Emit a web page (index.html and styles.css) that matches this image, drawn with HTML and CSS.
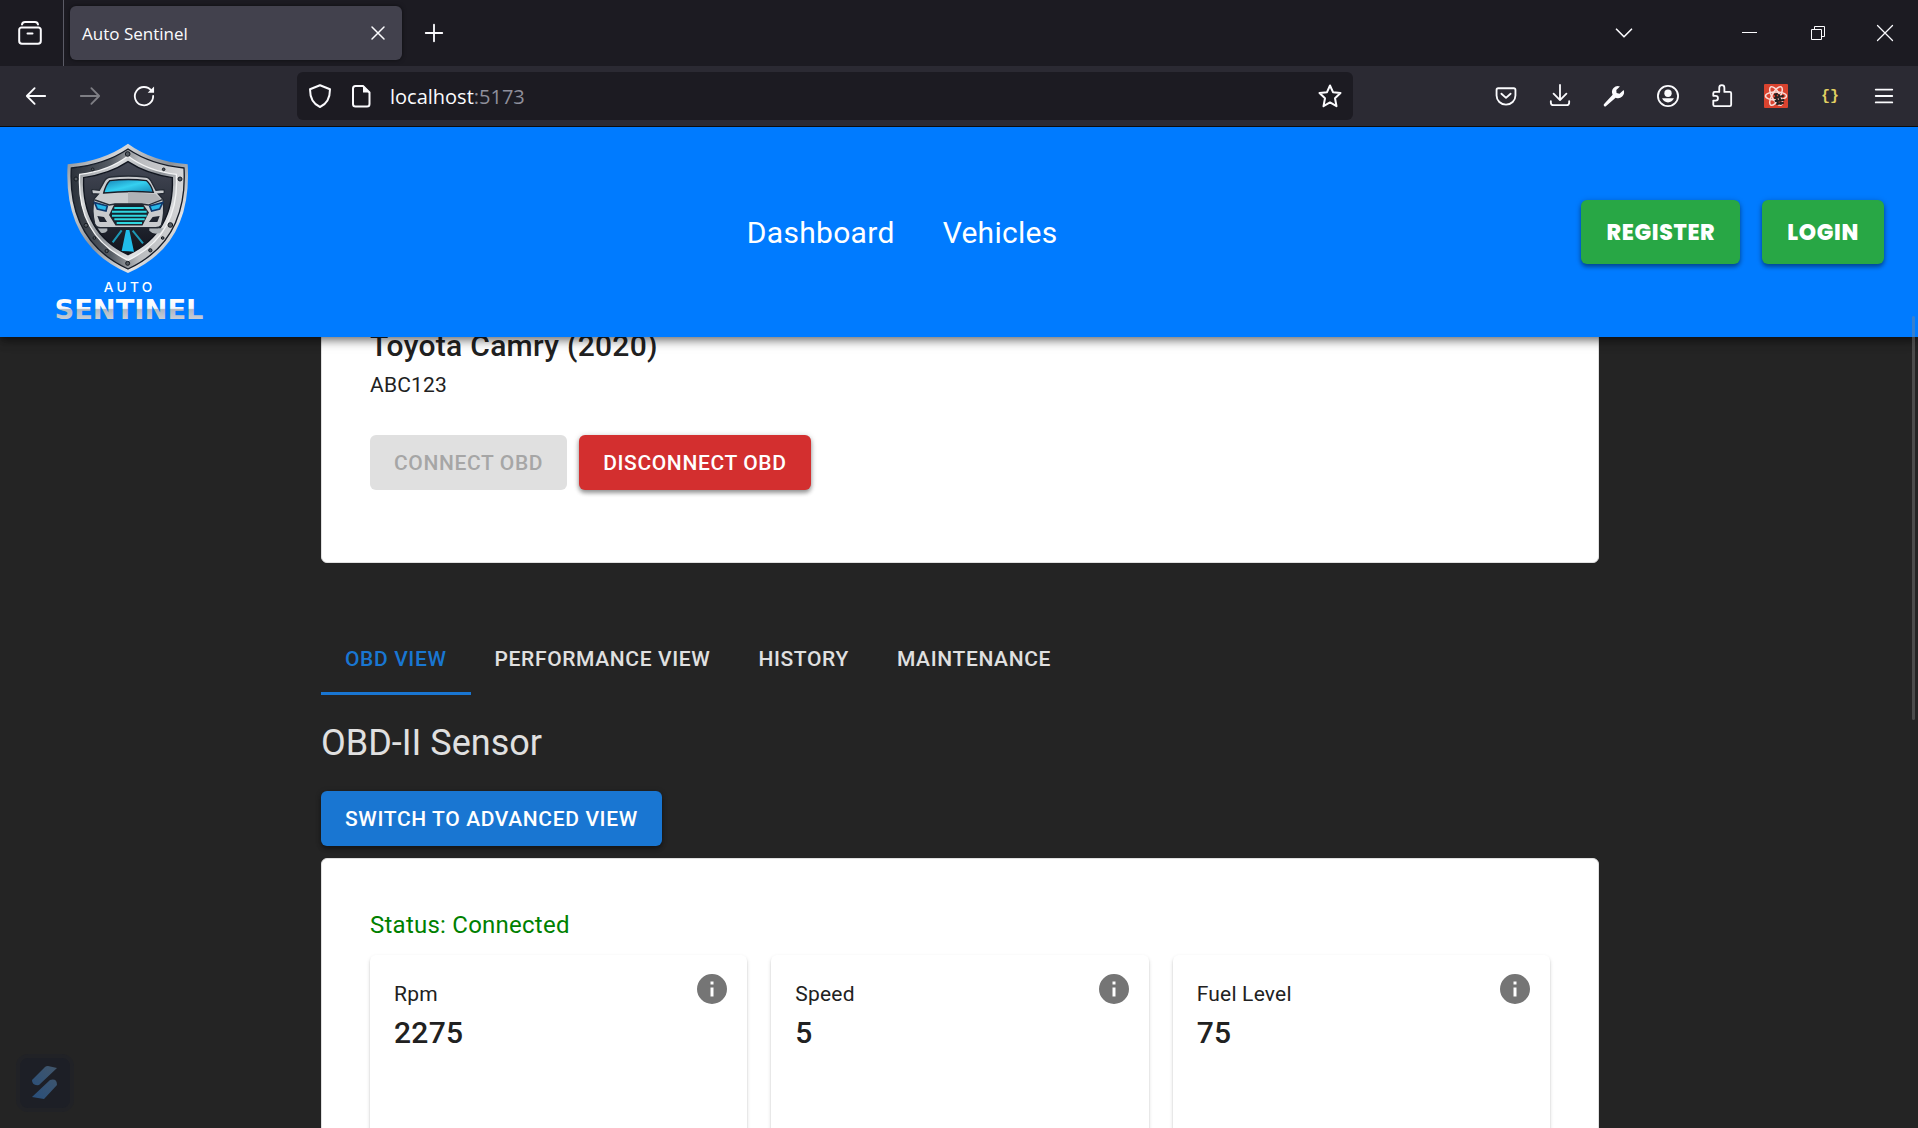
FILE: index.html
```html
<!DOCTYPE html>
<html lang="en">
<head>
<meta charset="utf-8">
<meta name="viewport" content="width=device-width, initial-scale=1">
<title>Auto Sentinel</title>
<link rel="stylesheet" href="styles.css">
</head>
<body>
<div class="browser">
  <div class="tabstrip">
    <button class="view-btn" aria-label="Firefox View"><svg class="ico" viewBox="0 0 24 24"><path d="M4 3.500Q4.500 1 7 1H17Q19.500 1 20 3.500M3.500 6.500H20.500A2.300 2.300 0 0 1 22.800 8.800V20A2.800 2.800 0 0 1 20 22.800H4A2.800 2.800 0 0 1 1.200 20V8.800A2.300 2.300 0 0 1 3.500 6.500ZM9.500 12.500H14.500"/></svg></button>
    <div class="tab"><span>Auto Sentinel</span><button class="tab-close" aria-label="Close tab"><svg class="ico thin" viewBox="0 0 24 24"><path d="M6 6 18 18M18 6 6 18"/></svg></button></div>
    <button class="icon-btn new-tab" aria-label="New tab"><svg class="ico" viewBox="0 0 24 24"><path d="M12 3V21M3 12H21"/></svg></button>
    <div class="window-controls">
      <button aria-label="List tabs"><svg class="ico" viewBox="0 0 24 24"><path d="M3 7.500 12 16.500 21 7.500"/></svg></button>
      <button aria-label="Minimize"><svg class="ico hair" viewBox="0 0 24 24"><path d="M5 11.500H20"/></svg></button>
      <button aria-label="Restore"><svg class="ico hair" viewBox="0 0 24 24"><path d="M5.500 8.500H15.500V18.500H5.500ZM8.500 8.500V5.500H18.500V15.500H15.500"/></svg></button>
      <button aria-label="Close window"><svg class="ico thin" viewBox="0 0 24 24"><path d="M3 3 21 21M21 3 3 21"/></svg></button>
    </div>
  </div>
  <div class="toolbar">
    <div class="nav-buttons">
      <button class="icon-btn" aria-label="Back"><svg class="ico" viewBox="0 0 24 24"><path d="M22 12H2M10.500 3.500 2 12 10.500 20.500"/></svg></button>
      <button class="icon-btn dim" aria-label="Forward" disabled><svg class="ico" viewBox="0 0 24 24"><path d="M2 12H22M13.500 3.500 22 12 13.500 20.500"/></svg></button>
      <button class="icon-btn" aria-label="Reload"><svg class="ico" viewBox="0 0 24 24"><path d="M20 6.200A10 10 0 1 0 22 12"/><path class="solid" d="M23 1.500V8.500H16Z"/></svg></button>
    </div>
    <div class="urlbar">
      <svg class="ico" viewBox="0 0 24 24"><path d="M12 1.200 22 5.300C22 13.500 19 20 12 23 5 20 2 13.500 2 5.300Z"/></svg>
      <svg class="ico" viewBox="0 0 24 24"><path d="M14 2H6.500A2.500 2.500 0 0 0 4 4.500V20A2.500 2.500 0 0 0 6.500 22.500H18A2.500 2.500 0 0 0 20.500 20V8.500Z"/><path class="solid" d="M14 1.500V8.500H21Z"/></svg>
      <div class="url"><span>localhost</span>:5173</div>
      <button class="star" aria-label="Bookmark this page"><svg class="ico" viewBox="0 0 24 24"><path d="M12 1.500 15 8.200 22.500 9 17 14.200 18.500 22.200 12 18.400 5.500 22.200 7 14.200 1.500 9 9 8.200Z"/></svg></button>
    </div>
    <div class="extensions">
      <button class="icon-btn" aria-label="Save to Pocket"><svg class="ico" viewBox="0 0 24 24"><path d="M3.500 3.500H20.500A1.800 1.800 0 0 1 22.300 5.300V11.500A10.300 10 0 0 1 1.700 11.500V5.300A1.800 1.800 0 0 1 3.500 3.500ZM7 9.500 12 14 17 9.500"/></svg></button>
      <button class="icon-btn" aria-label="Downloads"><svg class="ico" viewBox="0 0 24 24"><path d="M12 0V16M5 9.500 12 16.500 19 9.500M2 17.500V19A3 3 0 0 0 5 22H19A3 3 0 0 0 22 19V17.500"/></svg></button>
      <button class="icon-btn" aria-label="Developer tools"><svg class="ico" viewBox="0 0 24 24"><path class="solid" d="M22.500 5.500 18 9.500 14.800 8.800 14.500 5.500 18.500 1.500A6.500 6.500 0 0 0 10.500 10.500L1.200 20.800A1.500 1.500 0 0 0 3.400 23L13.800 13.800A6.500 6.500 0 0 0 22.500 5.500Z"/></svg></button>
      <button class="icon-btn" aria-label="Account"><svg class="ico" viewBox="0 0 24 24"><circle cx="12" cy="12" r="11"/><circle class="solid" cx="12" cy="9" r="4"/><path class="solid" d="M5.500 14.500H18.500Q16.500 19 12 19 7.500 19 5.500 14.500Z"/></svg></button>
      <button class="icon-btn" aria-label="Extensions"><svg class="ico" viewBox="0 0 24 24"><path d="M4 23Q2.500 23 2.500 21.500V17H5A2.600 2.600 0 0 0 5 11.800H2.500V9Q2.500 7.500 4 7.500H9V3A2.800 2.800 0 0 1 14.600 3V7.500H20.500Q22 7.500 22 9V21.500Q22 23 20.500 23Z"/></svg></button>
      <button class="icon-btn" aria-label="React Developer Tools"><svg class="ico react" viewBox="0 0 24 24"><rect class="react-bg" width="24" height="24" rx="1"/><ellipse cx="12" cy="12" rx="10.500" ry="4"/><ellipse cx="12" cy="12" rx="10.500" ry="4" transform="rotate(60 12 12)"/><ellipse cx="12" cy="12" rx="10.500" ry="4" transform="rotate(120 12 12)"/><path class="bug" d="M11 10.500 13 10M11 14 19 12M11.500 17 19.500 16M13 20 19 19M12 12 14 20M15 11 17 20"/></svg></button>
      <button class="icon-btn json" aria-label="JSON formatter">{}</button>
      <button class="icon-btn" aria-label="Menu"><svg class="ico" viewBox="0 0 24 24"><path d="M3 5H21M3 12H21M3 19H21"/></svg></button>
    </div>
  </div>

  <div class="page">
    <header class="appbar">
      <a class="logo" href="#" aria-label="Auto Sentinel home">
        <svg viewBox="18 -9 561 630">
          <defs>
            <linearGradient id="steel" x1="0" y1="0" x2="1" y2="1"><stop offset="0" stop-color="#777c82"/><stop offset=".25" stop-color="#d6d8da"/><stop offset=".5" stop-color="#8b9096"/><stop offset=".75" stop-color="#e2e3e5"/><stop offset="1" stop-color="#6f747b"/></linearGradient>
            <linearGradient id="rim" x1="0" y1="0" x2="1" y2="0"><stop offset="0" stop-color="#2c323b"/><stop offset=".35" stop-color="#555b63"/><stop offset=".6" stop-color="#b9bbbe"/><stop offset="1" stop-color="#d5d6d8"/></linearGradient>
            <linearGradient id="night" x1="0" y1="0" x2="0" y2="1"><stop offset="0" stop-color="#454a57"/><stop offset="1" stop-color="#10131c"/></linearGradient>
            <linearGradient id="glass" x1="0" y1="0" x2="1" y2="1"><stop offset="0" stop-color="#1480b4"/><stop offset=".5" stop-color="#35d0f0"/><stop offset="1" stop-color="#1485b4"/></linearGradient>
            <linearGradient id="chrome" gradientUnits="userSpaceOnUse" x1="0" y1="504" x2="0" y2="566"><stop offset="0" stop-color="#fff"/><stop offset=".5" stop-color="#f4f7fb"/><stop offset=".56" stop-color="#aeb7c2"/><stop offset="1" stop-color="#c5ccd5"/></linearGradient>
          </defs>
          <path d="M294 41Q365 93 473 103Q488 345 294 429Q98 345 113 103Q220 93 294 41Z" fill="url(#steel)"/>
          <path d="M294 57Q363 104 462 114Q474 333 294 417Q112 333 124 114Q224 104 294 57Z" fill="url(#rim)" stroke="#161c27" stroke-width="4"/>
          <path d="M294 78Q352 123 439 133Q450 315 294 391Q138 315 149 133Q236 123 294 78Z" fill="url(#steel)" stroke="#f3f4f5" stroke-width="4"/>
          <path d="M294 95Q350 132 427 143Q434 307 294 374Q154 307 161 143Q238 132 294 95Z" fill="url(#night)" stroke="#10151f" stroke-width="4"/>
          <g fill="#555b62" stroke="#161b22" stroke-width="3"><circle cx="293" cy="72" r="7"/><circle cx="188" cy="118" r="4"/><circle cx="401" cy="118" r="4"/><circle cx="138" cy="147" r="6"/><circle cx="450" cy="147" r="6"/><circle cx="168" cy="286" r="6"/><circle cx="421" cy="285" r="7"/><circle cx="193" cy="324" r="4"/><circle cx="398" cy="324" r="4"/><circle cx="230" cy="363" r="5"/><circle cx="361" cy="361" r="5"/><circle cx="293" cy="400" r="6"/></g>
          <path d="M203 295H232V302Q225 311 213 308ZM358 295H401L390 309Q370 315 358 302Z" fill="#aab0b5"/>
          <path d="M185 181Q185 178 190 179L208 181 224 152Q230 142 243 141Q295 135 346 141Q357 142 363 153L378 181 399 179Q405 179 402 190L385 192 399 208Q405 250 394 286Q389 293 377 293H212Q199 293 194 281Q184 241 193 206L205 192 187 191Z" fill="#c9cbce" stroke="#242a34" stroke-width="4"/>
          <path d="M221 189Q227 164 239 152Q295 145 350 152Q363 163 370 187Q295 181 221 189Z" fill="url(#glass)" stroke="#181e29" stroke-width="4"/>
          <path d="M294 187V222H346Q380 217 392 207L376 192Z" fill="#b0b2b6"/>
          <path d="M195 210 238 225 255 222H334L355 225 397 209" fill="none" stroke="#252b35" stroke-width="4"/>
          <path d="M194 218 232 228 228 243 202 237ZM398 218 359 228 365 243 389 237Z" fill="#27b7e8" stroke="#10386c" stroke-width="5"/>
          <path d="M255 224H337L354 248 336 284H258L240 255Z" fill="#122432" stroke="#20252e" stroke-width="5"/>
          <path d="M253 234H341M246 245H350M246 257H350M253 268H344M260 279H336" stroke="#30d6df" stroke-width="6"/>
          <path d="M202 258 222 261 231 276H209ZM389 258 368 261 357 276H382Z" fill="#1e2430"/>
          <path d="M288 300H298L312 365 294 364 275 363Z" fill="#20bdea"/>
          <path d="M275 301 248 337M308 302 339 340" stroke="#1d98b5" stroke-width="6"/>
          <text class="logo-auto" x="299" y="486">AUTO</text>
          <text class="logo-name" x="297" y="566" fill="url(#chrome)">SENTINEL</text>
        </svg>
      </a>
      <nav class="links"><a href="#">Dashboard</a><a href="#">Vehicles</a></nav>
      <div class="auth"><button class="btn auth-btn">REGISTER</button><button class="btn auth-btn">LOGIN</button></div>
    </header>

    <main class="content">
      <section class="card">
        <h2 class="value">Toyota Camry (2020)</h2>
        <p class="label">ABC123</p>
        <div class="actions"><button class="btn" disabled>CONNECT OBD</button><button class="btn danger">DISCONNECT OBD</button></div>
      </section>

      <div class="tabs" role="tablist">
        <button role="tab" aria-selected="true">OBD VIEW</button><button role="tab">PERFORMANCE VIEW</button><button role="tab">HISTORY</button><button role="tab">MAINTENANCE</button>
      </div>

      <h1 class="title">OBD-II Sensor</h1>
      <button class="btn primary">SWITCH TO ADVANCED VIEW</button>

      <section class="card readings">
        <p class="status">Status: Connected</p>
        <div class="sensors">
          <article class="sensor"><div><p class="label">Rpm</p><p class="value">2275</p></div><button aria-label="About Rpm"><svg viewBox="0 0 24 24"><path d="M12 2a10 10 0 1 0 0 20 10 10 0 0 0 0-20zm1 15h-2v-6h2zm0-8h-2V7h2z"/></svg></button></article>
          <article class="sensor"><div><p class="label">Speed</p><p class="value">5</p></div><button aria-label="About Speed"><svg viewBox="0 0 24 24"><path d="M12 2a10 10 0 1 0 0 20 10 10 0 0 0 0-20zm1 15h-2v-6h2zm0-8h-2V7h2z"/></svg></button></article>
          <article class="sensor"><div><p class="label">Fuel Level</p><p class="value">75</p></div><button aria-label="About Fuel Level"><svg viewBox="0 0 24 24"><path d="M12 2a10 10 0 1 0 0 20 10 10 0 0 0 0-20zm1 15h-2v-6h2zm0-8h-2V7h2z"/></svg></button></article>
        </div>
      </section>
    </main>

    <div class="scroll-thumb"></div>
    <button class="widget" aria-label="Open assistant"><svg viewBox="0 0 26 34"><defs><linearGradient id="bolt" x1="1" y1="0" x2="0" y2="1"><stop offset="0" stop-color="#42566a"/><stop offset="1" stop-color="#284f7c"/></linearGradient></defs><path fill="url(#bolt)" d="M13 1Q14 0 16 0L25 2 7 19Q0 20 0 14ZM18 14Q25 12 25 19L12 33 0 31Z"/></svg></button>
  </div>
</div>
</body>
</html>
```
FILE: styles.css
```css
* { box-sizing: border-box; }

body {
  margin: 0;
  background: #242424;
  font-family: Roboto, "Liberation Sans", sans-serif;
  color: #212121;
}

h1, h2, p { margin: 0; }

button {
  margin: 0;
  padding: 0;
  border: 0;
  background: none;
  color: inherit;
  font: inherit;
}

a { color: inherit; text-decoration: none; }

.browser {
  display: flex;
  flex-direction: column;
  height: 100vh;
  overflow: hidden;
}

/* Browser chrome */
.tabstrip {
  display: flex;
  align-items: center;
  flex: none;
  height: 66px;
  background: #1c1b22;
  color: #fbfbfe;
  font-family: "Open Sans", "Noto Sans", sans-serif;
}

.ico {
  display: block;
  width: 24px;
  height: 24px;
  fill: none;
  stroke: currentColor;
  stroke-width: 2;
  stroke-linecap: round;
  stroke-linejoin: round;
  overflow: visible;
}

.ico .solid { fill: currentColor; stroke: none; }
.ico.thin { stroke-width: 1.5; }
.ico.hair { stroke-width: 1; stroke-linecap: butt; stroke-linejoin: miter; }

.view-btn {
  display: grid;
  place-items: center;
  width: 64px;
  height: 66px;
  padding-right: 4px;
  border-right: 1px solid #5b5b66;
}

.tab {
  display: flex;
  align-items: center;
  justify-content: space-between;
  width: 332px;
  height: 54px;
  margin-left: 6px;
  padding: 0 12px;
  border-radius: 6px;
  background: #42414d;
  box-shadow: 0 0 4px #0008;
  font-size: 17px;
}

.icon-btn {
  display: grid;
  place-items: center;
  width: 54px;
  height: 48px;
}

.new-tab { margin-left: 5px; }
.new-tab .ico, .nav-buttons .ico { width: 22px; height: 22px; }

.window-controls { display: flex; margin-left: auto; }

.window-controls button {
  display: grid;
  place-items: center;
  width: 69px;
  height: 66px;
}

.window-controls button:first-child { margin-right: 56px; }
.window-controls button:last-child { width: 66px; }
.window-controls .ico { width: 20px; height: 20px; }
.window-controls .ico.hair { width: 24px; height: 24px; }

.toolbar {
  display: flex;
  align-items: center;
  flex: none;
  height: 61px;
  padding: 0 7px 0 9px;
  border-bottom: 1px solid #0c0c0d;
  background: #2b2a33;
  color: #fbfbfe;
  font-family: "Open Sans", "Noto Sans", sans-serif;
}

.nav-buttons { display: flex; flex: none; width: 288px; }
.icon-btn.dim { opacity: 0.4; }

.urlbar {
  display: flex;
  align-items: center;
  flex: 1;
  gap: 17px;
  height: 48px;
  padding: 0 11px;
  border-radius: 6px;
  background: #1c1b22;
  font-size: 20px;
}

.url { color: #8f8f9b; }
.url span { color: #fbfbfe; }
.star { margin-left: auto; }

.extensions { display: flex; flex: none; margin-left: 126px; }
.extensions .ico { width: 22px; height: 22px; }
.extensions .react { width: 24px; height: 24px; stroke: #f8dcd8; stroke-width: 1.5; }
.react .react-bg { fill: #d9432f; stroke: none; }
.react .bug { fill: none; stroke: #222; stroke-width: 2; }

.json {
  color: #e0cf62;
  font-family: "Liberation Mono", monospace;
  font-size: 15px;
  font-weight: 700;
}

/* Application */
.page {
  position: relative;
  flex: 1;
  min-height: 0;
  overflow: hidden;
}

.appbar {
  position: relative;
  z-index: 2;
  display: flex;
  align-items: center;
  height: 210px;
  padding: 0 34px 0 36px;
  background: #007bff;
  box-shadow: 0 3px 6px -1px #0005, 0 6px 8px #0003, 0 2px 15px #0002;
  color: #fff;
}

.logo { flex: none; width: 187px; height: 210px; }
.logo svg { display: block; width: 100%; height: 100%; }

.logo-auto, .logo-name { text-anchor: middle; }

.logo-auto {
  fill: #fff;
  font-family: Inter, sans-serif;
  font-size: 41px;
  font-weight: 500;
  letter-spacing: 10px;
}

.logo-name {
  font-family: "DejaVu Sans", sans-serif;
  font-size: 82px;
  font-weight: 700;
}

.links {
  display: flex;
  flex: 1;
  justify-content: center;
  gap: 48px;
  font-size: 30px;
  letter-spacing: 0.01em;
}

.auth { display: flex; flex: none; gap: 22px; }

.btn {
  height: 55px;
  padding: 0 24px;
  border-radius: 6px;
  font-size: 21px;
  font-weight: 500;
  letter-spacing: 0.03em;
  box-shadow: 0 3px 4px #0005, 0 1px 6px #0003;
  color: #fff;
}

.btn:disabled { background: #e0e0e0; color: #a6a6a6; box-shadow: none; }
.danger { background: #d32f2f; }
.primary { background: #1976d2; }

.auth-btn {
  height: 64px;
  padding: 0 25px;
  background: #28a745;
  font-family: Poppins, Inter, sans-serif;
  font-size: 22px;
  font-weight: 800;
}

.content {
  max-width: 1350px;
  margin: -64px auto 0;
  padding: 0 35px 0 37px;
}

.card {
  padding: 48px;
  border: 1px solid #e0e0e0;
  border-radius: 6px;
  background: #fff;
}

.value { font-size: 30px; font-weight: 500; line-height: 48px; letter-spacing: 0.01em; }
.label { font-size: 21px; line-height: 30px; letter-spacing: 0.01em; }

.actions { display: flex; gap: 12px; padding: 35px 0 24px; }

.tabs { display: flex; margin-top: 60px; color: #e0e0e0; }

.tabs button {
  height: 72px;
  padding: 0 24px;
  font-size: 21px;
  font-weight: 500;
  letter-spacing: 0.03em;
}

.tabs [aria-selected="true"] { box-shadow: inset 0 -3px #1976d2; color: #1976d2; }

.title {
  margin: 24px 0;
  color: #e0e0e0;
  font-size: 36px;
  font-weight: 400;
  line-height: 48px;
}

.readings { margin-top: 12px; }
.status { color: #008000; font-size: 24px; line-height: 36px; letter-spacing: 0.01em; }

.sensors {
  display: grid;
  grid-template-columns: repeat(3, 1fr);
  gap: 24px;
  margin-top: 12px;
}

.sensor {
  display: flex;
  align-items: flex-start;
  justify-content: space-between;
  min-height: 240px;
  padding: 16px 17px 24px 24px;
  border-radius: 6px;
  box-shadow: 0 3px 2px -2px #0003, 0 2px 2px #0002, 0 2px 4px #0002;
}

.sensor div { padding-top: 8px; }

.sensor svg {
  display: block;
  width: 36px;
  height: 36px;
  fill: #757575;
}

.scroll-thumb {
  position: absolute;
  z-index: 3;
  top: 189px;
  right: 3px;
  width: 3px;
  height: 404px;
  border-radius: 2px;
  background: #8886;
}

.widget {
  position: absolute;
  bottom: 16px;
  left: 16px;
  display: grid;
  place-items: center;
  width: 58px;
  height: 58px;
  border: 4px solid #212226;
  border-radius: 12px;
  background: #1d1f26;
}

.widget svg { width: 26px; height: 34px; }
```
